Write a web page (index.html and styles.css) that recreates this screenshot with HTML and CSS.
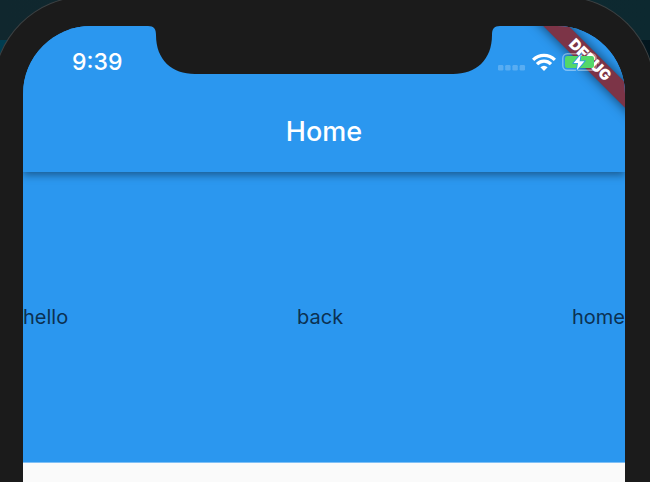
FILE: index.html
```
<!DOCTYPE html>
<html lang="en">
<head>
<meta charset="utf-8">
<title>Home</title>
<meta name="viewport" content="width=device-width, initial-scale=1">
<link rel="stylesheet" href="styles.css">
</head>
<body>
<div class="device">
  <div class="screen">
    <header class="top">
      <div class="status">
        <time class="clock">9:39</time>
        <div class="indicators">
          <svg class="signal" width="28" height="18" viewBox="0 0 28 18" aria-hidden="true">
            <g fill="#fff" fill-opacity=".22">
              <rect x="0" y="12" width="5.4" height="5.6" rx="1.3"/><rect x="7.2" y="12" width="5.4" height="5.6" rx="1.3"/><rect x="14.4" y="12" width="5.4" height="5.6" rx="1.3"/><rect x="21.6" y="12" width="5.4" height="5.6" rx="1.3"/>
            </g>
          </svg>
          <svg class="wifi" width="24" height="18" viewBox="0 0 24 18" aria-hidden="true">
            <g fill="none" stroke="#fff" stroke-width="3.3">
              <path d="M1.1 6.9C7.2.8 16.8.8 22.9 6.9"/>
              <path d="M5 11.2C9 7.2 15 7.2 19 11.2"/>
            </g>
            <path fill="#fff" d="M12 18 8.4 14.3Q12 11.2 15.6 14.3Z"/>
          </svg>
          <svg class="battery" width="38" height="20" viewBox="0 0 38 20" aria-hidden="true">
            <rect x=".8" y="1.8" width="33.4" height="16.4" rx="4.5" fill="none" stroke="#fff" stroke-opacity=".4" stroke-width="1.4"/>
            <path d="M35.7 7.2Q37.7 8 37.7 10T35.7 12.8Z" fill="#fff" fill-opacity=".4"/>
            <rect x="3" y="4" width="29" height="12" rx="2.2" fill="#53d769"/>
            <path d="M18.6 2.8 11.6 11H16L14.8 18.2 22.4 9.2H17.6Z" fill="#fff" stroke="#2b97ef" stroke-width="1.6" paint-order="stroke"/>
          </svg>
        </div>
      </div>
      <h1 class="title">Home</h1>
      <div class="ribbon">DEBUG</div>
    </header>
    <main class="row">
      <span>hello</span>
      <span>back</span>
      <span>home</span>
    </main>
    <div class="rest"></div>
    <svg class="notch" width="352" height="48" viewBox="0 0 352 48" aria-hidden="true">
      <path fill="#1b1b1b" d="M0 0C6 0 8 3 8 9C8 34 24 48 47 48H305C328 48 344 34 344 9C344 3 346 0 352 0Z"/>
    </svg>
  </div>
</div>
</body>
</html>
```
FILE: styles.css
```
* {
  box-sizing: border-box;
}

body {
  margin: 0;
  min-height: 100vh;
  overflow: hidden;
  background: linear-gradient(to right, #003d50, #03161e) 0 40px no-repeat,
    linear-gradient(to right, #10272e, #0d2930);
  font-family: Inter, "Liberation Sans", sans-serif;
}

.device {
  margin: -4px -5px 0 -7px;
  height: calc(100vh + 4px);
  padding: 29px 29px 0;
  border: 1px solid #3c4143;
  border-bottom: 0;
  border-radius: 93px 93px 0 0;
  background: #1b1b1b;
}

.screen {
  position: relative;
  display: flex;
  flex-direction: column;
  height: 100%;
  overflow: hidden;
  border-radius: 68px 68px 0 0;
  background: #2b97ef;
}

.top {
  position: relative;
  z-index: 1;
  height: 146px;
  background: #2b97ef;
  box-shadow: 0 3px 8px rgba(0, 0, 0, .4);
}

.status {
  position: relative;
  z-index: 2;
  display: flex;
  justify-content: space-between;
  align-items: center;
  height: 72px;
  padding: 0 25px 0 49px;
}

.clock {
  color: #fff;
  font-size: 23px;
  font-weight: 500;
  line-height: 28px;
}

.indicators {
  display: flex;
  align-items: center;
  gap: 6px;
}

.title {
  margin: 0;
  color: #fff;
  font-size: 27px;
  font-weight: 500;
  line-height: 68px;
  text-align: center;
}

.row {
  display: flex;
  justify-content: space-between;
  align-items: center;
  height: 291px;
  border-bottom: 1px solid #7fc0f6;
  color: #0b3152;
  font-size: 20px;
  line-height: 24px;
}

.rest {
  flex: 1;
  background: #fafafa;
}

.ribbon {
  position: absolute;
  z-index: 1;
  top: 25px;
  right: -65px;
  width: 200px;
  height: 18px;
  transform: rotate(45deg);
  background: #7c3447;
  box-shadow: 0 0 12px rgba(0, 0, 0, .6);
  color: #fff;
  font-size: 15px;
  font-weight: 900;
  line-height: 18px;
  text-align: center;
}

.notch {
  position: absolute;
  z-index: 3;
  top: 0;
  left: 50%;
  transform: translateX(-50%);
}
```
